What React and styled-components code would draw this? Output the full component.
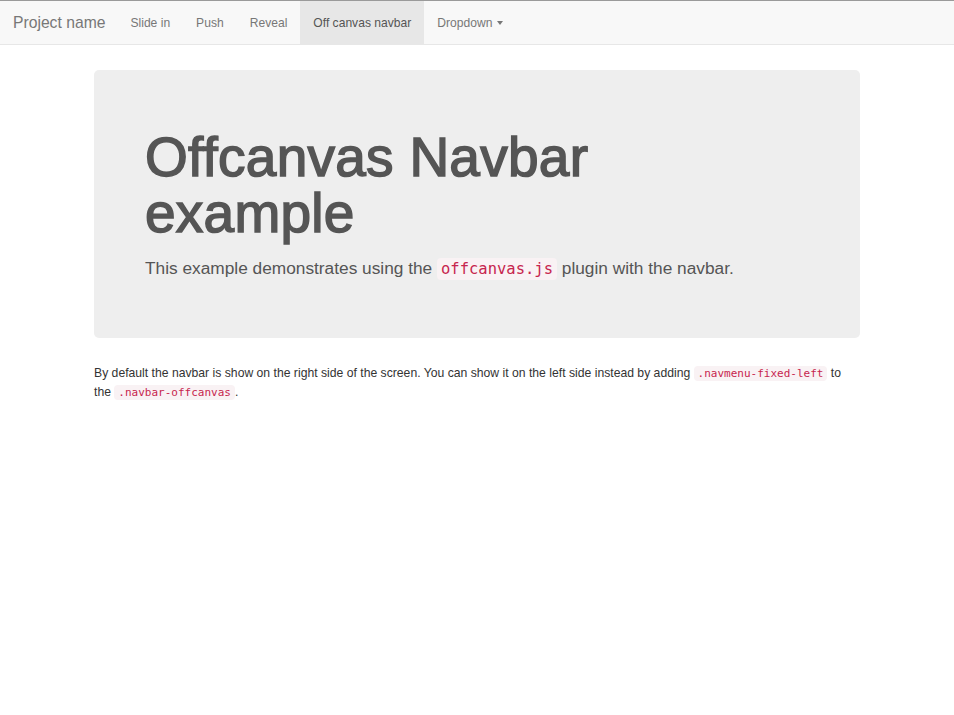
import React from 'react';
import styled, { createGlobalStyle } from 'styled-components';

const GlobalStyle = createGlobalStyle`
  html, body {
    margin: 0;
    padding: 0;
    background: #fff;
    font-family: "Liberation Sans", Arial, sans-serif;
    color: #333;
  }
`;

const Navbar = styled.nav`
  display: flex;
  align-items: stretch;
  height: 43px;
  background: #f8f8f8;
  border-top: 1px solid #9a9a9a;
  border-bottom: 1px solid #e7e7e7;
`;

const Brand = styled.a`
  display: flex;
  align-items: center;
  padding: 0 12px 0 13px;
  font-size: 15.7px;
  color: #777;
  text-decoration: none;
`;

const NavLink = styled.a`
  display: flex;
  align-items: center;
  gap: 5px;
  padding: 0 13px;
  font-size: 12.1px;
  color: ${p => (p.$active ? '#555' : '#777')};
  background: ${p => (p.$active ? '#e7e7e7' : 'transparent')};
  text-decoration: none;
`;

const Caret = styled.span`
  width: 0;
  height: 0;
  border-top: 4px solid #777;
  border-left: 3.5px solid transparent;
  border-right: 3.5px solid transparent;
`;

const Container = styled.div`
  width: 766px;
  margin: 0 auto;
`;

const Jumbotron = styled.div`
  margin-top: 25px;
  background: #eee;
  border-radius: 5px;
  padding: 59px 51px 50px;
  height: 268px;
  box-sizing: border-box;
`;

const Title = styled.h1`
  margin: 0 0 15px;
  font-size: 55px;
  line-height: 56px;
  font-weight: 400;
  letter-spacing: 0.25px;
  color: #555;
  -webkit-text-stroke: 1.5px #555;
`;

const Lead = styled.p`
  margin: 0;
  font-size: 17.3px;
  line-height: 24px;
  color: #555;
`;

const Code = styled.code`
  font-family: "DejaVu Sans Mono", "Liberation Mono", monospace;
  font-size: ${p => (p.$small ? '11px' : '15.5px')};
  line-height: 1;
  color: #c7254e;
  background: #f9f2f4;
  border-radius: 4px;
  padding: ${p => (p.$small ? '1px 4px' : '2px 4px')};
`;

const Body = styled.p`
  margin: 26px 0 0;
  font-size: 12.2px;
  line-height: 19px;
  color: #333;
`;

export default function App() {
  return (
    <>
      <GlobalStyle />
      <Navbar>
        <Brand href="#">Project name</Brand>
        <NavLink href="#">Slide in</NavLink>
        <NavLink href="#">Push</NavLink>
        <NavLink href="#">Reveal</NavLink>
        <NavLink href="#" $active>Off canvas navbar</NavLink>
        <NavLink href="#">Dropdown <Caret /></NavLink>
      </Navbar>
      <Container>
        <Jumbotron>
          <Title>Offcanvas Navbar<br />example</Title>
          <Lead>
            This example demonstrates using the <Code>offcanvas.js</Code> plugin with the navbar.
          </Lead>
        </Jumbotron>
        <Body>
          By default the navbar is show on the right side of the screen. You can show it on the left side instead by adding{' '}
          <Code $small>.navmenu-fixed-left</Code> to<br />
          the <Code $small>.navbar-offcanvas</Code>.
        </Body>
      </Container>
    </>
  );
}
